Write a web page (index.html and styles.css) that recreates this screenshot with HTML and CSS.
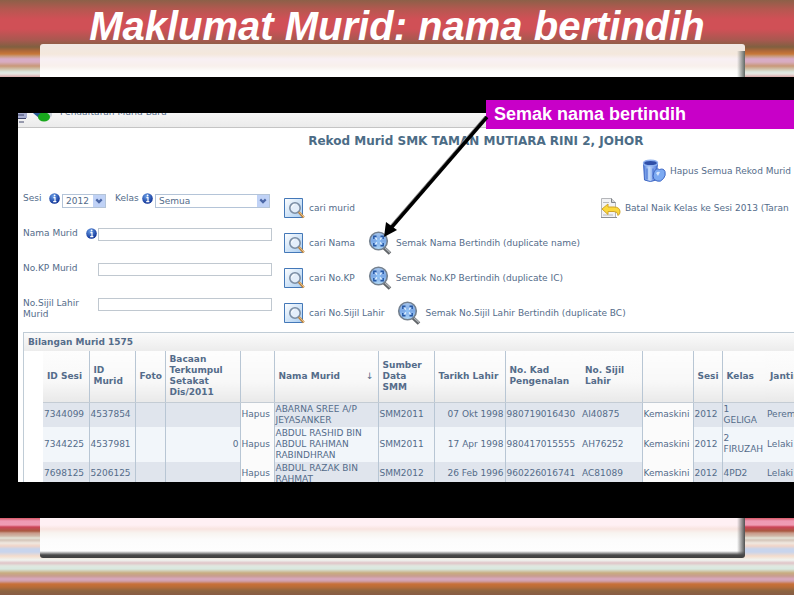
FILE: index.html
```
<!DOCTYPE html>
<html lang="ms">
<head>
    <meta charset="UTF-8">
    <meta name="viewport" content="width=device-width, initial-scale=1.0">
    <title>Maklumat Murid: nama bertindih</title>
    <link rel="stylesheet" href="styles.css">
</head>
<body>
    <svg class="symbols" aria-hidden="true">
        <defs>
            <linearGradient id="page-fill" x1="0" y1="0" x2="1" y2="1">
                <stop offset="0" stop-color="#ffffff"/>
                <stop offset="1" stop-color="#a8ccf0"/>
            </linearGradient>
            <radialGradient id="info-fill" cx="0.4" cy="0.3" r="0.7">
                <stop offset="0" stop-color="#6aa0e8"/>
                <stop offset="1" stop-color="#0c2f94"/>
            </radialGradient>
            <linearGradient id="lens-fill" x1="0" y1="0" x2="0" y2="1">
                <stop offset="0" stop-color="#a9c8ee"/>
                <stop offset="0.5" stop-color="#7aa8e6"/>
                <stop offset="1" stop-color="#b4dcfa"/>
            </linearGradient>
            <linearGradient id="bin-fill" x1="0" y1="0" x2="1" y2="0">
                <stop offset="0" stop-color="#4a78d8"/>
                <stop offset="0.4" stop-color="#c4dcfc"/>
                <stop offset="1" stop-color="#4c76dc"/>
            </linearGradient>
        </defs>
        <symbol id="icon-info" viewBox="0 0 11 11">
            <circle cx="5.5" cy="5.5" r="5.3" fill="url(#info-fill)"/>
            <path d="M4.4 4.6h1.600v3.6M4.200 8.6h3.200" fill="none" stroke="#fff" stroke-width="1.200"/>
            <circle cx="5.6" cy="2.5" r="0.9" fill="#fff"/>
        </symbol>
        <symbol id="icon-search" viewBox="0 0 22 22">
            <path d="M1.5 1.5h18v19h-18z" fill="url(#page-fill)" stroke="#4478b8"/>
            <circle cx="12" cy="11" r="5.2" fill="#e4eefa" stroke="#7c8ea4" stroke-width="1.6"/>
            <path d="M8.5 10.5a3.5 3.5 0 0 1 3-3" fill="none" stroke="#fff"/>
            <path d="M15.8 15l5 5.5" stroke="#b8803c" stroke-width="2.6"/>
            <path d="M16.4 15l4.6 5" stroke="#f0c890"/>
        </symbol>
        <symbol id="icon-zoom" viewBox="0 0 24 24">
            <path d="M15 16l7 6.500" stroke="#606468" stroke-width="3.6"/>
            <path d="M17 17l5 4.500" stroke="#b0b4b8" stroke-width="1.2"/>
            <circle cx="10.500" cy="10" r="8.800" fill="url(#lens-fill)" stroke="#74808e" stroke-width="1.6"/>
            <path d="M5.800 8V5.300h2.700M12.500 5.300h2.700V8M15.200 12v2.700h-2.700M8.500 14.700H5.800V12" fill="none" stroke="#2456a4" stroke-width="1.4"/>
            <path d="M8.500 8.200h4v3.600h-4z" fill="#8ec0f4"/>
            <path d="M7.500 7l1.500 1.500M13.500 7L12 8.500M7.500 13L9 11.500M13.500 13L12 11.500" stroke="#e8f4ff" stroke-width="1.2"/>
        </symbol>
        <symbol id="icon-bin" viewBox="0 0 24 24">
            <path d="M1.500 4l1 17q6 3 11.500 0l1.500-17z" fill="url(#bin-fill)" stroke="#4068c4"/>
            <ellipse cx="8.500" cy="4" rx="7" ry="2.800" fill="#2f4fa8" stroke="#8fb2f0" stroke-width="1.4"/>
            <path d="M5 9.500v11M11 9.500v11" stroke="#3f6cd0"/>
            <path d="M12 13q2-4.500 5.500-2.500q4-1.500 5.500 2q1 4-1.500 7q-3 4-6.500 2.500q-4-1-4-5z" fill="#7caaf2" stroke="#4068c4"/>
            <path d="M14 14q2-2 4-1l-2 4z" fill="#d4e6ff"/>
        </symbol>
        <symbol id="icon-undo" viewBox="0 0 22 22">
            <path d="M2.500 1.500h10l4 4v15h-14z" fill="#f2f2f4" stroke="#b4b6ba"/>
            <path d="M12.500 1.500v4h4" fill="#d4d6da" stroke="#808488"/>
            <path d="M4 5.500h6M4 18h10" stroke="#b8babe"/>
            <path d="M3 12l6-5v3h6q6 0 6 5q0 2-2 3.500q0-4-4-4H9v3z" fill="#fbd83c" stroke="#d0a428"/>
            <path d="M2 20.500h16" stroke="#8c8e92"/>
        </symbol>
    </svg>

    <div class="slide">
        <h1 class="slide-title">Maklumat Murid: nama bertindih</h1>
        <div class="panel panel-top"></div>

        <div class="shot">
            <div class="screen">
                <div class="toolbar">
                    <svg class="toolbar-icons" viewBox="0 0 42 14" aria-hidden="true">
                        <path d="M0 0h9v5h-9z" fill="#a8aed0"/>
                        <path d="M0 2h6M0 5.500h8M1 9h5" stroke="#40466c"/>
                        <path d="M15 0h8l3 5h-5z" fill="#2c5c98"/>
                        <circle cx="30" cy="1" r="4" fill="#c8d0d8"/>
                        <ellipse cx="26" cy="4" rx="6" ry="4.500" fill="#18a81c"/>
                    </svg>
                    <span class="toolbar-text">Pendaftaran Murid Baru</span>
                </div>

                <div class="page">
                    <h2 class="page-title">Rekod Murid SMK TAMAN MUTIARA RINI 2, JOHOR</h2>

                    <form class="search-form">
                        <div class="form-row form-row-top">
                            <a href="#" class="action action-delete"><svg class="icon-big"><use href="#icon-bin"/></svg>Hapus Semua Rekod Murid</a>
                        </div>
                        <div class="form-row">
                            <div class="fields">
                                <label for="sesi" class="label-sesi">Sesi</label>
                                <svg class="icon-info"><use href="#icon-info"/></svg>
                                <span class="select select-sesi">
                                    <select id="sesi"><option>2012</option></select>
                                    <svg class="arrow" viewBox="0 0 11 11"><path d="M3 4l2.500 2.500L8 4" fill="none" stroke="#4c68a8" stroke-width="2"/></svg>
                                </span>
                                <label for="kelas" class="label-kelas">Kelas</label>
                                <svg class="icon-info"><use href="#icon-info"/></svg>
                                <span class="select select-kelas">
                                    <select id="kelas"><option>Semua</option></select>
                                    <svg class="arrow" viewBox="0 0 11 11"><path d="M3 4l2.500 2.500L8 4" fill="none" stroke="#4c68a8" stroke-width="2"/></svg>
                                </span>
                            </div>
                            <a href="#" class="action"><svg class="icon"><use href="#icon-search"/></svg>cari murid</a>
                            <a href="#" class="action action-undo"><svg class="icon"><use href="#icon-undo"/></svg>Batal Naik Kelas ke Sesi 2013 (Taran</a>
                        </div>
                        <div class="form-row">
                            <div class="fields">
                                <label for="nama" class="label-text">Nama Murid <svg class="icon-info"><use href="#icon-info"/></svg></label>
                                <input type="text" id="nama">
                            </div>
                            <a href="#" class="action"><svg class="icon"><use href="#icon-search"/></svg>cari Nama</a>
                            <a href="#" class="action"><svg class="icon-big"><use href="#icon-zoom"/></svg>Semak Nama Bertindih (duplicate name)</a>
                        </div>
                        <div class="form-row">
                            <div class="fields">
                                <label for="nokp" class="label-text">No.KP Murid</label>
                                <input type="text" id="nokp">
                            </div>
                            <a href="#" class="action"><svg class="icon"><use href="#icon-search"/></svg>cari No.KP</a>
                            <a href="#" class="action"><svg class="icon-big"><use href="#icon-zoom"/></svg>Semak No.KP Bertindih (duplicate IC)</a>
                        </div>
                        <div class="form-row">
                            <div class="fields">
                                <label for="sijil" class="label-text">No.Sijil Lahir Murid</label>
                                <input type="text" id="sijil">
                            </div>
                            <a href="#" class="action"><svg class="icon"><use href="#icon-search"/></svg>cari No.Sijil Lahir</a>
                            <a href="#" class="action"><svg class="icon-big"><use href="#icon-zoom"/></svg>Semak No.Sijil Lahir Bertindih (duplicate BC)</a>
                        </div>
                    </form>

                    <div class="records">
                        <div class="records-head">Bilangan Murid 1575</div>
                        <table>
                            <colgroup>
                                <col class="w-id"><col class="w-id"><col class="w-foto"><col class="w-bacaan"><col class="w-hapus">
                                <col class="w-nama"><col class="w-sumber"><col class="w-tarikh"><col class="w-kad"><col class="w-sijil">
                                <col class="w-kemas"><col class="w-sesi"><col class="w-kelas"><col>
                            </colgroup>
                            <thead>
                                <tr>
                                    <th>ID Sesi</th>
                                    <th>ID Murid</th>
                                    <th>Foto</th>
                                    <th>Bacaan Terkumpul Setakat Dis/2011</th>
                                    <th></th>
                                    <th><span class="sort">Nama Murid <i>↓</i></span></th>
                                    <th>Sumber Data SMM</th>
                                    <th>Tarikh Lahir</th>
                                    <th class="open">No. Kad Pengenalan</th>
                                    <th>No. Sijil Lahir</th>
                                    <th></th>
                                    <th>Sesi</th>
                                    <th class="open">Kelas</th>
                                    <th>Jantina</th>
                                </tr>
                            </thead>
                            <tbody>
                                <tr>
                                    <td>7344099</td>
                                    <td>4537854</td>
                                    <td></td>
                                    <td class="num"></td>
                                    <td class="cmd"><a href="#">Hapus</a></td>
                                    <td>ABARNA SREE A/P JEYASANKER</td>
                                    <td>SMM2011</td>
                                    <td class="num">07 Okt 1998</td>
                                    <td class="open">980719016430</td>
                                    <td>AI40875</td>
                                    <td class="cmd"><a href="#">Kemaskini</a></td>
                                    <td>2012</td>
                                    <td class="open">1<br>GELIGA</td>
                                    <td>Perempuan</td>
                                </tr>
                                <tr>
                                    <td>7344225</td>
                                    <td>4537981</td>
                                    <td></td>
                                    <td class="num">0</td>
                                    <td class="cmd"><a href="#">Hapus</a></td>
                                    <td>ABDUL RASHID BIN ABDUL RAHMAN RABINDHRAN</td>
                                    <td>SMM2011</td>
                                    <td class="num">17 Apr 1998</td>
                                    <td class="open">980417015555</td>
                                    <td>AH76252</td>
                                    <td class="cmd"><a href="#">Kemaskini</a></td>
                                    <td>2012</td>
                                    <td class="open">2<br>FIRUZAH</td>
                                    <td>Lelaki</td>
                                </tr>
                                <tr>
                                    <td>7698125</td>
                                    <td>5206125</td>
                                    <td></td>
                                    <td class="num"></td>
                                    <td class="cmd"><a href="#">Hapus</a></td>
                                    <td>ABDUL RAZAK BIN RAHMAT</td>
                                    <td>SMM2012</td>
                                    <td class="num">26 Feb 1996</td>
                                    <td class="open">960226016741</td>
                                    <td>AC81089</td>
                                    <td class="cmd"><a href="#">Kemaskini</a></td>
                                    <td>2012</td>
                                    <td class="open">4PD2</td>
                                    <td>Lelaki</td>
                                </tr>
                            </tbody>
                        </table>
                    </div>
                </div>
            </div>

            <div class="callout">Semak nama bertindih</div>
            <svg class="pointer" viewBox="0 0 106 124" aria-hidden="true">
                <path d="M102 1L6 112" stroke="#999" stroke-width="1"/>
                <path d="M104 2L8 113" stroke="#000" stroke-width="3.500"/>
                <path d="M1 122L3 107L14 115z" fill="#000"/>
            </svg>
        </div>

        <div class="panel panel-bottom"></div>
    </div>
</body>
</html>
```

FILE: styles.css
```
* {
    box-sizing: border-box;
}
body {
    margin: 0;
    font-family: 'DejaVu Sans', Verdana, sans-serif;
    font-size: 9px;
    line-height: 11px;
    color: #546c8a;
}
a {
    color: inherit;
    text-decoration: none;
}
.symbols {
    position: absolute;
    width: 0;
    height: 0;
}

/* slide background: stripes at the top and at the bottom */
.slide {
    min-height: 100vh;
    overflow: hidden;
    padding-bottom: 37px;
    background:
        linear-gradient(to bottom,
            #d85868 0, #ee9ab4 3px, #f09cb4 7px, #cc4458 9px, #a85840 13px,
            #c89888 15px, #d0b8a8 18px, #e4e4d8 20px, #d4c4b8 22px, #f0e8e0 25px,
            #f0d4c8 28px, #c8d4ec 31px, #c8d4ec 34px, #f4dccc 38px, #f0f4f0 42px,
            #e0c4c8 45px, #e0e8e0 48px, #d8e8e0 51px, #c8ac80 55px, #c89c90 58px,
            #d8a8c0 61px, #d0a0ac 63px, #c87038 66px, #b86c38 69px, #8c6440 73px, #885c44 77px)
        bottom / 100% 77px no-repeat,
        linear-gradient(to bottom,
            #8c6048 0, #b45850 9px, #d05056 19px, #d05056 29px, #a85850 40px,
            #806040 47px, #b06838 51px, #c87838 54px, #c89878 56px, #d8acc8 59px,
            #d8acc0 62px, #c89878 66px, #d0c0a8 69px, #dce8e0 72px, #e8e4e0 74px, #d8a8a8 77px)
        top / 100% 77px no-repeat #000;
}
.slide-title {
    margin: 0;
    height: 44px;
    padding-top: 4px;
    font: italic bold 40px/44px 'Liberation Sans', Arial, sans-serif;
    color: #fff;
    text-align: center;
    white-space: nowrap;
}
.panel {
    margin: 0 49px 0 40px;
}
.panel-top {
    height: 33px;
    border-radius: 3px 3px 0 0;
    background:
        linear-gradient(to right, transparent, #606864) right bottom / 8px 26px no-repeat,
        linear-gradient(to bottom, #f0e8e4 0, #f4e8dc 10px, #f8f0f4 15px, #f8f0ec 22px, #fcfcfa 27px, #fff 33px);
}
.panel-bottom {
    height: 40px;
    border-radius: 0 0 3px 3px;
    background:
        linear-gradient(to bottom, transparent, #484848 4px, #404040) bottom / 100% 7px no-repeat,
        linear-gradient(to right, transparent, #505050) right top / 8px 100% no-repeat,
        linear-gradient(to bottom, #fff0f4 0, #fff0f4 7px, #f8e4e0 11px, #f8f4f0 15px, #fcfcfc 22px, #fff 100%);
}

.shot {
    position: relative;
    padding: 36px 0 36px 18px;
    background: #000;
}
.screen {
    max-height: 369px;
    overflow: hidden;
    background: #fff;
}
.toolbar {
    display: flex;
    height: 15px;
    overflow: hidden;
    background: linear-gradient(#f6f6f6, #ebebeb);
    border-bottom: 1px solid #c4c4c4;
}
.toolbar-icons {
    flex: none;
    width: 42px;
    height: 14px;
}
.toolbar-text {
    margin-top: -6px;
}
/* the page runs on past the right edge of the screen */
.page {
    width: 118%;
    padding: 0 5px;
}
.page-title {
    margin: 0;
    padding: 7px 0 5px;
    font-size: 12px;
    line-height: 13px;
    color: #4c6c86;
    text-align: center;
}

.form-row {
    display: flex;
    align-items: center;
    height: 35px;
    padding-top: 5px;
}
.form-row-top {
    padding-top: 1px;
}
.fields {
    display: flex;
    align-items: flex-start;
    align-self: flex-start;
    width: 249px;
    margin-right: 11px;
}
.label-text {
    display: flex;
    justify-content: space-between;
    width: 75px;
    padding-right: 1px;
}
.label-sesi {
    width: 26px;
}
.label-kelas {
    width: 27px;
}
.fields input {
    width: 174px;
    height: 13px;
    border: 1px solid #c0c8d0;
    padding: 0 2px;
    font: inherit;
    color: inherit;
}
.select {
    position: relative;
    height: 14px;
    margin: 1px 9px 0 2px;
}
.select-sesi {
    width: 44px;
}
.select-kelas {
    width: 115px;
    margin-right: 0;
}
.select select {
    appearance: none;
    display: block;
    width: 100%;
    height: 14px;
    padding: 0 3px;
    border: 1px solid #b4c4d8;
    border-radius: 0;
    background: #fff;
    font: inherit;
    color: inherit;
}
.select .arrow {
    position: absolute;
    top: 1px;
    right: 1px;
    width: 12px;
    height: 12px;
    background: #c0d2f6;
    pointer-events: none;
}
.icon-info {
    flex: none;
    width: 11px;
    height: 11px;
}
.icon {
    flex: none;
    width: 22px;
    height: 22px;
}
.icon-big {
    flex: none;
    width: 24px;
    height: 24px;
}
.action {
    display: flex;
    align-items: center;
    gap: 4px;
    margin-right: 13px;
    white-space: nowrap;
}
.action-delete {
    margin-left: 619px;
}
.action-undo {
    margin-left: 231px;
}

.records {
    margin-top: 4px;
    border: 1px solid #c0ccd6;
}
.records-head {
    height: 18px;
    padding: 4px;
    background: linear-gradient(#fbfbfb, #ececec);
    font-weight: bold;
}
table {
    width: calc(100% - 19px);
    margin-left: 19px;
    table-layout: fixed;
    border-collapse: collapse;
}
.w-id {
    width: 46px;
}
.w-foto {
    width: 30px;
}
.w-bacaan {
    width: 75px;
}
.w-hapus {
    width: 34px;
}
.w-nama {
    width: 104px;
}
.w-sumber {
    width: 56px;
}
.w-tarikh {
    width: 71px;
}
.w-kad {
    width: 76px;
}
.w-sijil {
    width: 61px;
}
.w-kemas {
    width: 51px;
}
.w-sesi {
    width: 29px;
}
.w-kelas {
    width: 44px;
}
th, td {
    border-right: 1px solid #b8c6d4;
    text-align: left;
}
th {
    height: 51px;
    padding: 0 4px;
    border-bottom: 1px solid #c4ccd4;
    background: linear-gradient(#fdfdfd, #f8f8f8 60%, #e9e9e9);
}
td {
    padding: 1px;
    background: #f2f6fa;
}
tbody tr:nth-child(odd) td {
    background: #e0e5ed;
}
tbody tr td.cmd {
    background: #fbfbfb;
}
th.open, td.open {
    border-right: 0;
}
.num {
    text-align: right;
}
.sort {
    display: flex;
    justify-content: space-between;
}
.sort i {
    font-style: normal;
    font-weight: normal;
}

.callout {
    position: absolute;
    top: 23px;
    left: 486px;
    right: 0;
    height: 29px;
    padding-left: 8px;
    background: #c800c8;
    font: bold 18px/29px 'Liberation Sans', Arial, sans-serif;
    color: #fff;
}
.pointer {
    position: absolute;
    top: 38px;
    left: 383px;
    width: 106px;
    height: 124px;
}
```
